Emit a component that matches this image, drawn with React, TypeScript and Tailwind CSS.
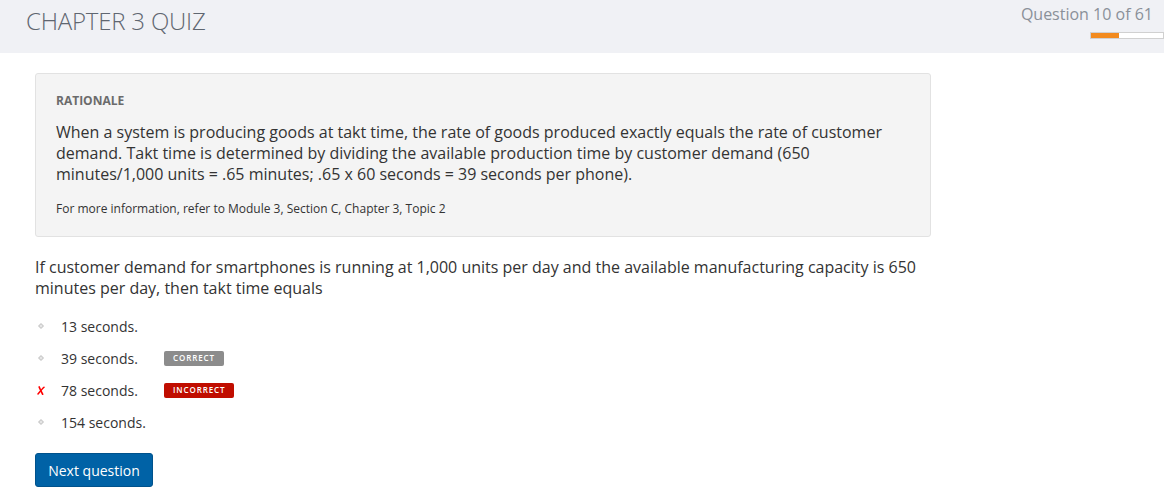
import React from "react";

const options = [
  { text: "13 seconds.", mark: "dot" as const },
  { text: "39 seconds.", mark: "dot" as const, badge: "correct" as const },
  { text: "78 seconds.", mark: "x" as const, badge: "incorrect" as const },
  { text: "154 seconds.", mark: "dot" as const },
];

function Dot() {
  return (
    <svg width="6" height="6" viewBox="0 0 6 6">
      <path d="M3 0.5 L5.5 3 L3 5.5 L0.5 3 Z" fill="#dadada" stroke="#b8b8b8" strokeWidth="0.8" />
      <circle cx="3" cy="3" r="0.8" fill="#f4f4f4" />
    </svg>
  );
}

function XMark() {
  return (
    <svg width="8" height="9" viewBox="0 0 8 9">
      <path d="M2.2 1 C3 3 4 5 5.6 8.2" stroke="#ff0000" strokeWidth="1.7" fill="none" strokeLinecap="round" />
      <path d="M7 1.2 C5 3 3 5.5 1 8" stroke="#ff0000" strokeWidth="1.5" fill="none" strokeLinecap="round" />
    </svg>
  );
}

export default function App() {
  return (
    <div className="w-[1164px] h-[494px] bg-white overflow-hidden" style={{ fontFamily: '"Open Sans", sans-serif' }}>
      <header className="h-[53px] bg-[#f0f1f5] flex justify-between">
        <h1 className="pl-[26px] pt-[5px] text-[24px] font-light text-[#5f6670] leading-[32px] tracking-[-0.2px]">CHAPTER 3 QUIZ</h1>
        <div className="flex flex-col items-end">
          <div className="pt-[3px] pr-[11px] text-[16px] leading-[22px] text-[#8a9099]">Question 10 of 61</div>
          <div className="mt-[7px] w-[74px] h-[7px] bg-white border border-[#d0d0d0] flex">
            <div className="w-[28px] h-full bg-[#f28a1e]" />
          </div>
        </div>
      </header>

      <main className="pl-[35px] pt-[20px] w-[931px]">
        <section className="bg-[#f4f4f4] border border-[#e2e2e2] rounded-[3px] px-[20px] pt-[19px] pb-[19px]">
          <div className="text-[12px] font-bold text-[#6b6b6b] leading-[16px]">RATIONALE</div>
          <p className="mt-[13px] text-[16px] leading-[21px] text-[#333]">
            When a system is producing goods at takt time, the rate of goods produced exactly equals the rate of customer demand. Takt time is determined by dividing the available production time by customer demand (650 minutes/1,000 units = .65 minutes; .65 x 60 seconds = 39 seconds per phone).
          </p>
          <p className="mt-[15px] text-[12px] leading-[17px] text-[#333]">
            For more information, refer to Module 3, Section C, Chapter 3, Topic 2
          </p>
        </section>

        <p className="mt-[20px] text-[16px] leading-[21px] text-[#333] pr-[10px]">
          If customer demand for smartphones is running at 1,000 units per day and the available manufacturing capacity is 650 minutes per day, then takt time equals
        </p>

        <ul className="mt-[11px] flex flex-col">
          {options.map((o) => (
            <li key={o.text} className="h-[32px] flex items-center text-[14px] text-[#333]">
              <span className="w-[26px] pl-[2px] flex items-center">
                {o.mark === "dot" ? <span className="pl-[1px] flex"><Dot /></span> : <XMark />}
              </span>
              <span className="w-[103px]">{o.text}</span>
              {o.badge === "correct" && (
                <span className="h-[15px] px-[9px] bg-[#8c8c8c] text-white text-[8px] font-semibold tracking-[0.9px] rounded-[2px] flex items-center">CORRECT</span>
              )}
              {o.badge === "incorrect" && (
                <span className="h-[15px] px-[9px] bg-[#c00d00] text-white text-[8px] font-semibold tracking-[0.9px] rounded-[2px] flex items-center">INCORRECT</span>
              )}
            </li>
          ))}
        </ul>

        <button className="mt-[15px] h-[34px] w-[118px] bg-[#0062a6] text-white text-[14px] rounded-[3px] border border-[#00528c]">
          Next question
        </button>
      </main>
    </div>
  );
}
